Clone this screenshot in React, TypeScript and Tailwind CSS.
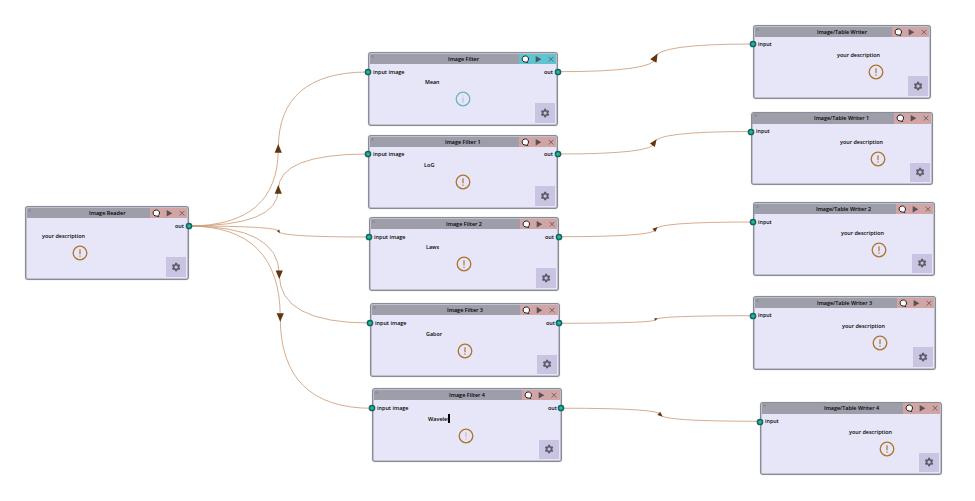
import React from "react";

type NodeData = {
  x: number;
  y: number;
  w: number;
  title: string;
  titleW: number;
  text: string;
  textX: number;
  textW: number;
  iconX: number;
  input?: string;
  inputY?: number;
  out?: boolean;
  active?: boolean;
  faint?: boolean;
  caret?: boolean;
};

const nodes: NodeData[] = [
  { x: 25, y: 206, w: 164, title: "Image Reader", titleW: 36.5, text: "your description", textX: 17, textW: 43, iconX: 55.3, out: true },
  { x: 368, y: 52, w: 190, title: "Image Filter", titleW: 31, text: "Mean", textX: 57, textW: 14.5, iconX: 95.2, input: "input image", out: true, active: true, faint: true },
  { x: 368, y: 135, w: 190, title: "Image Filter 1", titleW: 35.5, text: "LoG", textX: 56.5, textW: 10.5, iconX: 94.7, input: "input image", inputY: 19, out: true },
  { x: 369, y: 217, w: 190, title: "Image Filter 2", titleW: 36, text: "Laws", textX: 57, textW: 13, iconX: 95.2, input: "input image", out: true },
  { x: 370, y: 303.4, w: 189.5, title: "Image Filter 3", titleW: 36, text: "Gabor", textX: 56.5, textW: 16, iconX: 94.9, input: "input image", out: true },
  { x: 372, y: 388.4, w: 189.5, title: "Image Filter 4", titleW: 36, text: "Wavelet", textX: 56, textW: 21.5, iconX: 94.2, input: "input image", out: true, faint: true, caret: true },
  { x: 753, y: 25, w: 178, title: "Image/Table Writer", titleW: 50, text: "your description", textX: 84.6, textW: 43, iconX: 122.8, input: "input", inputY: 19 },
  { x: 750.7, y: 111.6, w: 182.3, title: "Image/Table Writer 1", titleW: 55, text: "your description", textX: 89.6, textW: 43, iconX: 127.9, input: "input" },
  { x: 752.5, y: 202.3, w: 182.3, title: "Image/Table Writer 2", titleW: 55, text: "your description", textX: 88.8, textW: 43, iconX: 127, input: "input" },
  { x: 753, y: 296, w: 183, title: "Image/Table Writer 3", titleW: 55, text: "your description", textX: 89.2, textW: 43, iconX: 127.6, input: "input", inputY: 19.5 },
  { x: 760, y: 401.6, w: 182, title: "Image/Table Writer 4", titleW: 55, text: "your description", textX: 89, textW: 43, iconX: 127.5, input: "input" },
];

type Edge = { a: [number, number]; b: [number, number]; angle: number; size: number };

const edges: Edge[] = [
  { a: [188.5, 226], b: [368, 72], angle: -90, size: 1 },
  { a: [188.5, 226], b: [368, 154], angle: -90, size: 1 },
  { a: [188.5, 226], b: [369.5, 237], angle: 60, size: 0.4 },
  { a: [188.5, 226], b: [370, 323], angle: 90, size: 1 },
  { a: [188.5, 226], b: [372, 408.3], angle: 90, size: 1 },
  { a: [558, 71.7], b: [753, 44], angle: -60, size: 1 },
  { a: [558, 154], b: [751, 131.5], angle: -55, size: 0.85 },
  { a: [559, 236.7], b: [752.5, 222], angle: -40, size: 0.6 },
  { a: [559.5, 323.3], b: [753, 315.7], angle: -20, size: 0.4 },
  { a: [561.5, 408.2], b: [760, 421.3], angle: 40, size: 0.6 },
];

/** Single-line label squeezed or stretched to a known width. */
function Label({ text, w }: { text: string; w: number }) {
  return (
    <svg className="block h-[10px] overflow-visible" width={w} height={10}>
      <text x="0" y="7.1" textLength={w} lengthAdjust="spacingAndGlyphs" className="fill-black font-['Open_Sans',sans-serif] text-[6px] font-semibold">
        {text}
      </text>
    </svg>
  );
}

function Port({ side, y }: { side: "left" | "right"; y: number }) {
  return (
    <svg
      className={`absolute size-[8px] ${side === "left" ? "-left-[4.8px]" : "-right-[4.6px]"}`}
      style={{ top: y - 4.8 }}
      viewBox="0 0 8 8"
    >
      <circle cx="4" cy="4" r="2.6" fill="#22bf85" stroke="#14606c" strokeWidth="1.5" />
    </svg>
  );
}

function Toolbar({ active }: { active?: boolean }) {
  return (
    <div className={`flex h-full w-[37.5px] items-center ${active ? "bg-[#5fc4d0]" : "bg-[#d0a5a3]"}`}>
      <svg className="h-full w-full" viewBox="0 0 37.5 10.3">
        <path d="M6.3 2C4.4 2 3.1 3.3 3.1 5c0 1.8 1.3 3 3.2 3l2.5.5-.4-1.1c.7-.6 1.1-1.4 1.1-2.4 0-1.7-1.3-3-3.2-3Z" fill="white" stroke="#151515" strokeWidth=".95" />
        <path d="M16.7 1.9v6.6l5.6-3.3Z" fill="#555159" />
        <path d="M29.7 2.9l4.6 4.6M34.3 2.9 29.7 7.5" stroke="#665e65" strokeWidth=".9" fill="none" />
      </svg>
    </div>
  );
}

function Gear() {
  return (
    <svg width="10.2" height="10.2" viewBox="0 0 24 24" fill="#5f5c69">
      <path d="M19.43 12.98c.04-.32.07-.64.07-.98s-.03-.66-.07-.98l2.11-1.65c.19-.15.24-.42.12-.64l-2-3.46c-.12-.22-.39-.3-.61-.22l-2.49 1c-.52-.4-1.08-.73-1.69-.98l-.38-2.65A.49.49 0 0 0 14 2h-4c-.25 0-.46.18-.49.42l-.38 2.65c-.61.25-1.17.59-1.69.98l-2.49-1c-.23-.09-.49 0-.61.22l-2 3.46c-.13.22-.07.49.12.64l2.11 1.65c-.04.32-.07.65-.07.98s.03.66.07.98l-2.11 1.65c-.19.15-.24.42-.12.64l2 3.46c.12.22.39.3.61.22l2.49-1c.52.4 1.08.73 1.69.98l.38 2.65c.03.24.24.42.49.42h4c.25 0 .46-.18.49-.42l.38-2.65c.61-.25 1.17-.59 1.69-.98l2.49 1c.23.09.49 0 .61-.22l2-3.46c.12-.22.07-.49-.12-.64l-2.11-1.65ZM12 15.8a3.8 3.8 0 1 1 0-7.6 3.8 3.8 0 0 1 0 7.6Z" />
    </svg>
  );
}

function StatusIcon({ active, faint }: { active?: boolean; faint?: boolean }) {
  const color = active ? "#70b2c2" : "#ad752c";
  return (
    <svg className="block" width="16" height="16" viewBox="0 0 16 16">
      <circle cx="8" cy="8" r="6.8" fill="none" stroke={color} strokeWidth="1.3" />
      {active ? (
        <path d="M8 4.4v1.2M8 6.8v4.9" stroke="#a9cbdc" strokeWidth="1.2" />
      ) : (
        <path d="M8 4.3v5M8 10.4v1.3" stroke={faint ? "#d5b7a2" : color} strokeWidth="1.2" />
      )}
    </svg>
  );
}

function GraphNode({ n }: { n: NodeData }) {
  const portY = n.inputY ?? 20;
  return (
    <div
      className="absolute flex h-[73.5px] flex-col rounded-[3px] border border-[#868d93] bg-[#e7e6f9] shadow-[inset_0_0_0_0.8px_#b4b5c4,0_0_1px_#a5a5b0]"
      style={{ left: n.x, top: n.y, width: n.w }}
    >
      <div className="relative mx-[0.7px] mt-[0.7px] flex h-[10.3px] shrink-0 items-center justify-end rounded-t-[1px] bg-[#9e9daa]">
        <span className="absolute left-[1.5px] top-[1px] size-[3px] rounded-full bg-[#8e8e9a]" />
        <div className="absolute inset-x-0 top-0 flex justify-center">
          <Label text={n.title} w={n.titleW} />
        </div>
        <Toolbar active={n.active} />
      </div>
      <div className="flex h-[12px] shrink-0 justify-between pl-[4px] pr-[4px]" style={{ paddingTop: portY - 17.4 }}>
        <div>{n.input && <Label text={n.input} w={n.input === "input" ? 13.7 : 31.5} />}</div>
        {n.out && <Label text="out" w={9} />}
      </div>
      <div className="mt-[0.3px] flex h-[12px] shrink-0 items-center" style={{ paddingLeft: n.textX - 1.2 }}>
        <Label text={n.text} w={n.textW} />
        {n.caret && <span className="-ml-[1px] h-[9px] w-[2px] bg-black" />}
      </div>
      <div className="mt-[3px] shrink-0" style={{ paddingLeft: n.iconX - 9.2 }}>
        <StatusIcon active={n.active} faint={n.faint} />
      </div>
      <div className="absolute bottom-[1.8px] right-[1.7px] flex h-[19.5px] w-[20px] items-center justify-center bg-[#c9c4e2]">
        <Gear />
      </div>
      {n.input && <Port side="left" y={portY - 0.2} />}
      {n.out && <Port side="right" y={portY - 0.2} />}
    </div>
  );
}

function Wire({ e }: { e: Edge }) {
  const [x1, y1] = e.a;
  const [x2, y2] = e.b;
  const mx = (x1 + x2) / 2;
  const my = (y1 + y2) / 2;
  const tipShift = e.angle > 0 ? 0.3 : -0.6;
  return (
    <g>
      <path d={`M${x1} ${y1}Q${mx} ${y1} ${mx} ${my}Q${mx} ${y2} ${x2} ${y2}`} fill="none" stroke="#cf9d78" strokeWidth=".85" />
      <path d="M-4.3-3.6 4.3 0-4.3 3.6Z" fill="#63350f" transform={`translate(${mx} ${my + tipShift}) rotate(${e.angle}) scale(${e.size})`} />
    </g>
  );
}

export default function App() {
  return (
    <main className="relative h-[501px] w-[975px] overflow-hidden bg-white">
      <svg className="absolute inset-0" width="975" height="501">
        {edges.map((e, i) => (
          <Wire key={i} e={e} />
        ))}
      </svg>
      {nodes.map((n) => (
        <GraphNode key={n.title} n={n} />
      ))}
    </main>
  );
}
